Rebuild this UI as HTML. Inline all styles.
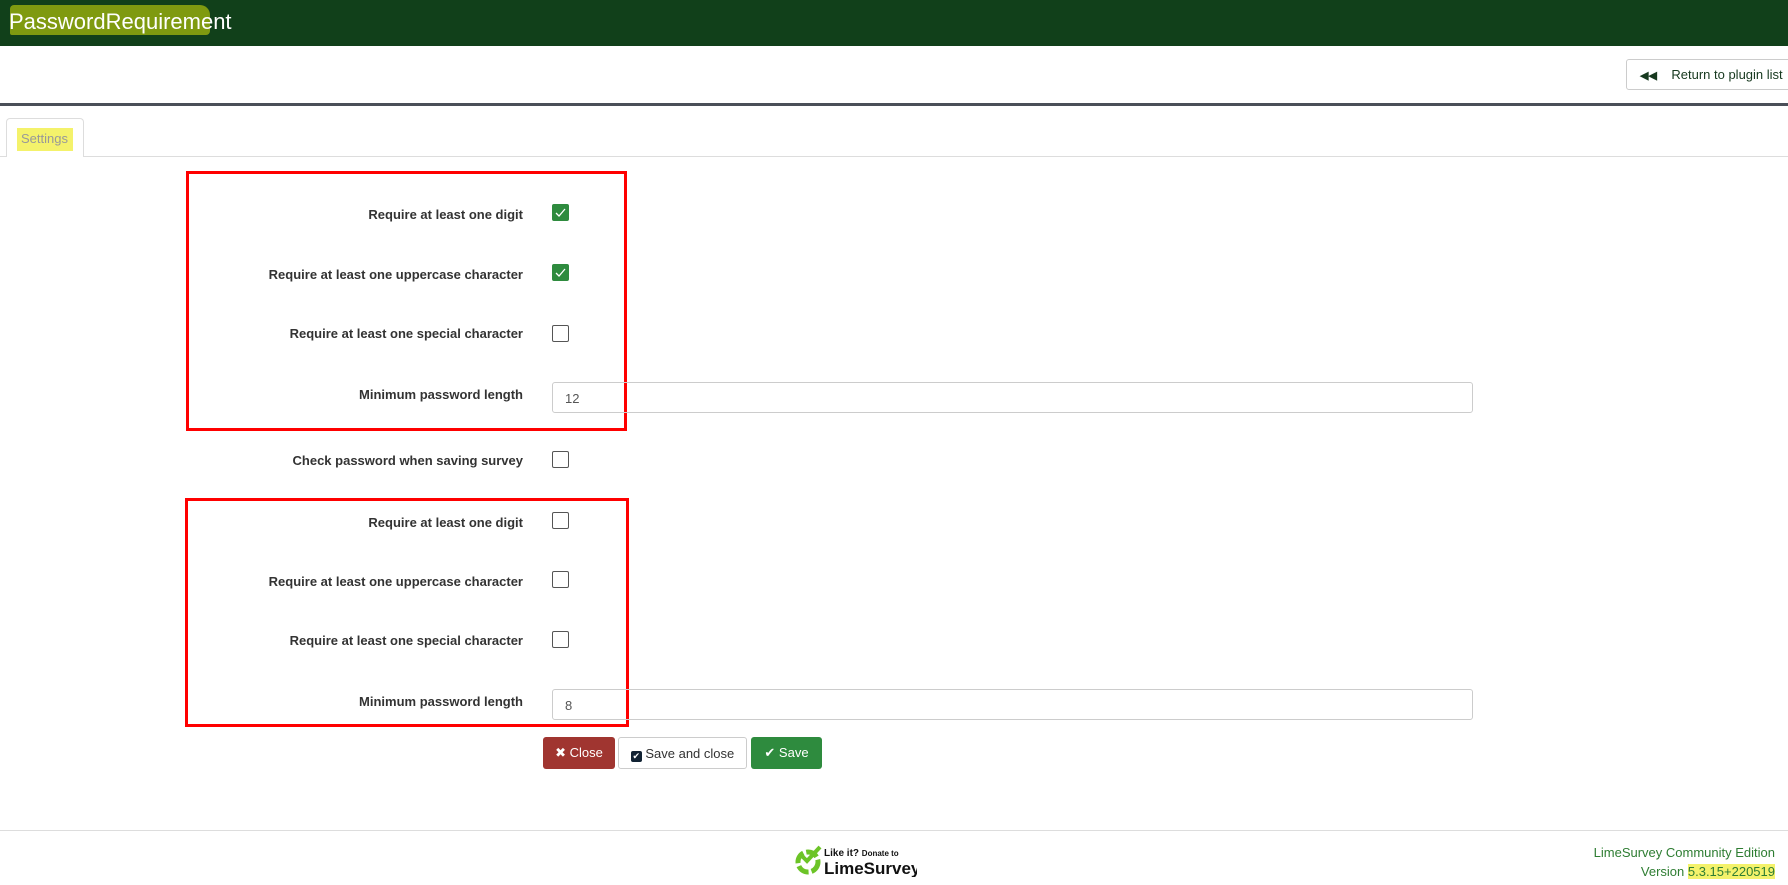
<!DOCTYPE html>
<html><head><meta charset="utf-8"><style>
*{box-sizing:border-box;margin:0;padding:0}
body{width:1788px;height:885px;position:relative;background:#fff;font-family:"Liberation Sans",Arial,sans-serif;overflow:hidden}
.hdr{position:absolute;left:0;top:0;width:1788px;height:46px;background:#11401a}
.hl{position:absolute;left:10px;top:5px;width:200px;height:30px;background:#7f9a10;border-radius:4px 10px 4px 2px}
.ttl{position:absolute;left:9px;top:9px;color:#fff;font-size:22px}
.bar{position:absolute;left:0;top:103px;width:1788px;height:3px;background:#4a4f58}
.ret{position:absolute;left:1626px;top:59px;width:170px;height:31px;border:1px solid #ccc;border-radius:3px;font-size:13px;color:#17391f;padding:7px 0 0 13px}
.tab{position:absolute;left:6px;top:118px;width:78px;height:39px;border:1px solid #ddd;border-bottom:none;border-radius:4px 4px 0 0;background:#fff}
.tabl{position:absolute;left:0;top:156px;width:1788px;height:1px;background:#ddd}
.tab span{position:absolute;left:10px;top:9px;background:#f4f26b;color:#999;font-size:13px;padding:3px 5px 5px 4px}
.lbl{position:absolute;right:1265px;font-size:13px;font-weight:bold;color:#333;white-space:nowrap}
.cb{position:absolute;left:552px;width:17px;height:17px;border:1px solid #555;border-radius:2px;background:#fff}
.cb.on{background:#2e8b3e;border-color:#2e8b3e}
.inp{position:absolute;left:552px;width:921px;height:31px;border:1px solid #ccc;border-radius:3px;font-size:13px;color:#555;padding:8px 0 0 12px}
.red{position:absolute;border:3px solid #ff0000}
.btn{position:absolute;top:737px;height:32px;border-radius:3px;font-size:13px;padding:8px 0 0 0;text-align:center}
.foot{position:absolute;left:0;top:830px;width:1788px;height:1px;background:#ddd}
.ver{position:absolute;right:13px;top:843px;text-align:right;color:#2e7d32;font-size:13px;line-height:19px}
</style></head><body>
<div class="hdr"><div class="hl"></div><div class="ttl">PasswordRequirement</div></div>
<div class="ret"><span style="font-size:11px;font-weight:bold">◀◀</span>&nbsp;&nbsp;&nbsp; Return to plugin list</div>
<div class="bar"></div>
<div class="tabl"></div>
<div class="tab"><span>Settings</span></div>

<div class="red" style="left:186px;top:171px;width:441px;height:260px"></div>
<div class="red" style="left:185px;top:498px;width:444px;height:229px"></div>

<div class="lbl" style="top:207px">Require at least one digit</div>
<div class="cb on" style="top:204px"><svg width="15" height="15"><path d="M3 8l3 3 6-7" stroke="#fff" stroke-width="1.3" fill="none"/></svg></div>
<div class="lbl" style="top:267px">Require at least one uppercase character</div>
<div class="cb on" style="top:264px"><svg width="15" height="15"><path d="M3 8l3 3 6-7" stroke="#fff" stroke-width="1.3" fill="none"/></svg></div>
<div class="lbl" style="top:326px">Require at least one special character</div>
<div class="cb" style="top:325px"></div>
<div class="lbl" style="top:387px">Minimum password length</div>
<div class="inp" style="top:382px">12</div>
<div class="lbl" style="top:453px">Check password when saving survey</div>
<div class="cb" style="top:451px"></div>
<div class="lbl" style="top:515px">Require at least one digit</div>
<div class="cb" style="top:512px"></div>
<div class="lbl" style="top:574px">Require at least one uppercase character</div>
<div class="cb" style="top:571px"></div>
<div class="lbl" style="top:633px">Require at least one special character</div>
<div class="cb" style="top:631px"></div>
<div class="lbl" style="top:694px">Minimum password length</div>
<div class="inp" style="top:689px">8</div>

<div class="btn" style="left:543px;width:72px;background:#a03530;color:#fff">✖ Close</div>
<div class="btn" style="left:618px;width:129px;border:1px solid #ccc;color:#333">
<span style="display:inline-block;width:11px;height:11px;background:#123;border-radius:2px;vertical-align:-1px;color:#fff;font-size:9px;line-height:11px">✔</span> Save and close</div>
<div class="btn" style="left:751px;width:71px;background:#2e8b3e;color:#fff">✔ Save</div>

<div class="foot"></div>
<svg style="position:absolute;left:793px;top:843px" width="124" height="34">
<circle cx="15" cy="19" r="10" fill="none" stroke="#6cc427" stroke-width="5" stroke-dasharray="12 3"/>
<path d="M8 12l6 6L27 4" stroke="#6cc427" stroke-width="4" fill="none"/>
<text x="31" y="13" font-family="Liberation Sans" font-weight="bold" font-size="10" fill="#111">Like it? <tspan font-size="8">Donate to</tspan></text>
<text x="31" y="31" font-family="Liberation Sans" font-weight="bold" font-size="17" fill="#111">LimeSurvey</text>
</svg>
<div class="ver">LimeSurvey Community Edition<br>Version <span style="background:#f4f26b">5.3.15+220519</span></div>
</body></html>
